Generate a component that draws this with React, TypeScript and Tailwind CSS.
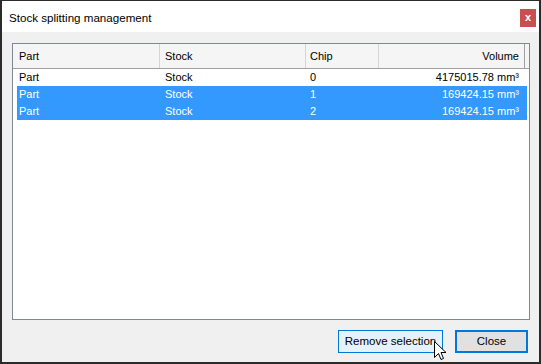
import React from "react";

const rows = [
  { part: "Part", stock: "Stock", chip: "0", vol: "4175015.78 mm³", sel: false, focus: false },
  { part: "Part", stock: "Stock", chip: "1", vol: "169424.15 mm³", sel: true, focus: false },
  { part: "Part", stock: "Stock", chip: "2", vol: "169424.15 mm³", sel: true, focus: true },
];

export default function App() {
  return (
    <div
      className="relative w-[541px] h-[364px] bg-[#f0f0f0] border-t border-l-2 border-r-2 border-b-2 border-[#2b2b2b] flex flex-col text-black"
      style={{ fontFamily: "'Liberation Sans', Arial, sans-serif" }}
    >
      {/* Title bar */}
      <div className="h-[31px] bg-white flex items-start relative">
        <div className="pl-[7px] pt-[9px] text-[11.6px] leading-[15px]">Stock splitting management</div>
        <div className="absolute left-[518px] top-[8px] w-[16px] h-[18px] bg-[#c75050] flex items-center justify-center text-white text-[11px] font-bold leading-none pb-[2px]">
          x
        </div>
      </div>

      {/* Body */}
      <div className="flex flex-col pl-[10px] pr-[9px] pt-[11px]">
        <div className="h-[277px] border border-[#828790] bg-white flex flex-col text-[11px]">
          {/* header */}
          <div className="h-[25px] flex bg-[#f5f5f5] border-b border-[#a0a0a0]">
            <div className="w-[147px] border-r border-[#d5d5d5] pl-[6px] flex items-center">Part</div>
            <div className="w-[146px] border-r border-[#d5d5d5] pl-[5px] flex items-center">Stock</div>
            <div className="w-[73px] border-r border-[#d5d5d5] pl-[4px] flex items-center">Chip</div>
            <div className="w-[146px] border-r border-[#a0a0a0] pr-[5px] flex items-center justify-end">Volume</div>
            <div className="flex-1" />
          </div>
          {/* rows */}
          <div className="flex flex-col">
            {rows.map((r, i) => (
              <div
                key={i}
                className={
                  "relative ml-[4px] mr-[2px] h-[17px] flex items-center " +
                  (r.sel ? "bg-[#3399ff] text-white " : "text-black ")
                }
              >
                {r.focus && (
                  <div className="absolute inset-0 border border-dotted border-[#d07020]" />
                )}
                <div className="w-[143px] pl-[2px]">{r.part}</div>
                <div className="w-[146px] pl-[5px]">{r.stock}</div>
                <div className="w-[73px] pl-[4px]">{r.chip}</div>
                <div className="w-[146px] pr-[6px] text-right">{r.vol}</div>
              </div>
            ))}
          </div>
        </div>

        {/* buttons */}
        <div className="mt-[10px] flex justify-end pr-[2px] gap-[12px] text-[11.5px]">
          <div className="w-[105px] h-[23px] border border-[#0078d7] bg-[#e5f1fb] flex items-center justify-center">
            Remove selection
          </div>
          <div className="w-[73px] h-[23px] border-2 border-[#0078d7] bg-[#e1e1e1] flex items-center justify-center">
            Close
          </div>
        </div>
      </div>

      {/* mouse cursor */}
      <svg
        className="absolute left-[432px] top-[340px]"
        width="13"
        height="21"
        viewBox="0 0 13 21"
      >
        <path
          d="M0.5 0.5 L0.5 16.5 L4.5 12.5 L7 18.5 L9.5 17.5 L7 11.5 L12 11.5 Z"
          fill="white"
          stroke="black"
          strokeWidth="1"
          strokeLinejoin="miter"
        />
      </svg>
    </div>
  );
}
